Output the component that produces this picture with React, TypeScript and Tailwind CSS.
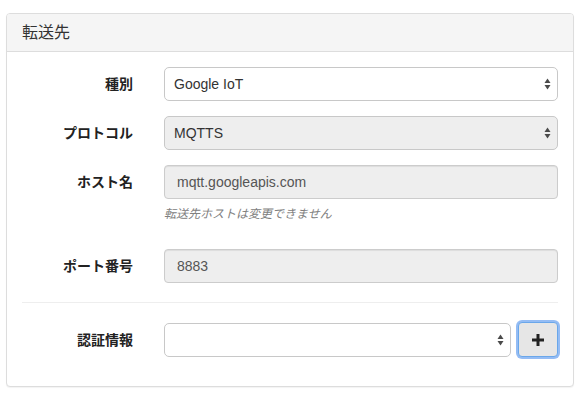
import React from "react";

const font = "[font-family:'Liberation_Sans','Noto_Sans_CJK_JP',sans-serif]";

function Arrows() {
    return (
        <svg width="7" height="12" viewBox="0 0 7 12" className="pointer-events-none absolute right-[6px] top-1/2 -translate-y-1/2">
            <path d="M3.5 0.5 L6.5 5 L0.5 5 Z" fill="#4a4a4a" />
            <path d="M3.5 11.5 L6.5 7 L0.5 7 Z" fill="#4a4a4a" />
        </svg>
    );
}

function Row({ label, children }: { label: string; children: React.ReactNode }) {
    return (
        <div className="flex items-start">
            <label className="w-[111px] shrink-0 text-right text-[14px] font-bold text-[#222] leading-[20px] pt-[7px]">
                {label}
            </label>
            <div className="ml-[31px] flex-1">{children}</div>
        </div>
    );
}

function SelectBox({ value, disabled }: { value: string; disabled?: boolean }) {
    return (
        <div
            className={`relative h-[34px] rounded-[5px] border border-[#c8c8c8] flex items-center pl-[9px] text-[14px] text-[#333] ${
                disabled ? "bg-[#eee]" : "bg-white"
            }`}
        >
            {value}
            <Arrows />
        </div>
    );
}

function TextBox({ value }: { value: string }) {
    return (
        <div className="h-[34px] rounded-[4px] border border-[#ccc] bg-[#eee] flex items-center px-3 text-[14px] text-[#555] shadow-[inset_0_1px_1px_rgba(0,0,0,0.075)]">
            {value}
        </div>
    );
}

export default function App() {
    return (
        <div className={`pt-[13px] pl-[6px] bg-white min-h-[403px] ${font}`}>
            <div className="w-[568px] rounded-[4px] border border-[#ddd] bg-white shadow-[0_1px_1px_rgba(0,0,0,0.05)]">
                <div className="h-[38px] bg-[#f5f5f5] border-b border-[#ddd] rounded-t-[3px] px-[15px] flex items-center text-[16px] text-[#333]">
                    転送先
                </div>
                <div className="px-[15px] pt-[15px] pb-[29px] flex flex-col">
                    <Row label="種別">
                        <SelectBox value="Google IoT" />
                    </Row>
                    <div className="h-[15px]" />
                    <Row label="プロトコル">
                        <SelectBox value="MQTTS" disabled />
                    </Row>
                    <div className="h-[15px]" />
                    <Row label="ホスト名">
                        <TextBox value="mqtt.googleapis.com" />
                        <p className="mt-[5px] h-[20px] leading-[20px] text-[12px] italic text-[#808080]">
                            転送先ホストは変更できません
                        </p>
                    </Row>
                    <div className="h-[25px]" />
                    <Row label="ポート番号">
                        <TextBox value="8883" />
                    </Row>
                    <div className="h-[19px]" />
                    <hr className="border-0 border-t border-[#eee]" />
                    <div className="h-[20px]" />
                    <Row label="認証情報">
                        <div className="flex gap-[7px]">
                            <div className="flex-1">
                                <SelectBox value="" />
                            </div>
                            <button className="w-[40px] h-[35px] -mt-px rounded-[4px] border border-[#6aa7ea] bg-[#e6e6e6] shadow-[0_0_0_2px_rgba(102,160,240,0.7)] flex items-center justify-center">
                                <svg width="12" height="12" viewBox="0 0 12 12">
                                    <path d="M4.5 0 H7.5 V4.5 H12 V7.5 H7.5 V12 H4.5 V7.5 H0 V4.5 H4.5 Z" fill="#222" />
                                </svg>
                            </button>
                        </div>
                    </Row>
                </div>
            </div>
        </div>
    );
}
